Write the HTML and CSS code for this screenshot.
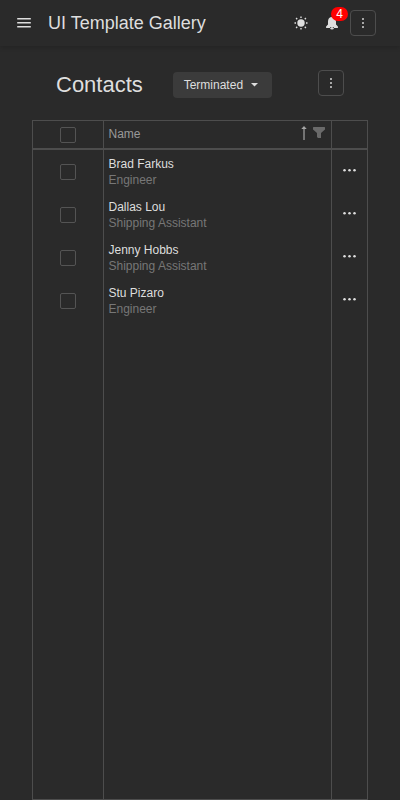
FILE: index.html
```html
<!DOCTYPE html>
<html lang="en">
<head>
<meta charset="utf-8">
<title>UI Template Gallery</title>
<link rel="stylesheet" href="styles.css">
</head>
<body>
<header class="topbar">
  <svg class="menu-icon" width="14" height="12" viewBox="0 0 14 12"><path d="M.2 1.700h13.600M.2 5.700h13.600M.2 9.700h13.600"/></svg>
  <h1 class="app-title">UI Template Gallery</h1>
  <svg class="sun" width="14" height="14" viewBox="0 0 14 14"><circle cx="7" cy="7" r="3.700"/><path d="M7 .5v1.500M7 12v1.500M.5 7h1.500M12 7h1.500M2.100 2.100l1.100 1.100M10.800 10.800l1.100 1.100M2.100 11.900l1.100-1.100M10.800 3.200l1.100-1.100"/></svg>
  <div class="bell-wrap">
    <svg class="bell" width="12" height="13" viewBox="0 0 12 13"><path d="M6 0C3.400 0 2 2 2 4.500v3L.1 9.500v1.500h3.800a2.200 2.200 0 0 0 4.200 0h3.800V9.500L10 7.500v-3C10 2 8.600 0 6 0z"/><path class="bell-slit" d="M4 10.600h1.300M6.700 10.600H8"/></svg>
    <span class="badge">4</span>
  </div>
  <button class="more" aria-label="More"><svg width="2" height="10" viewBox="0 0 2 10"><circle cx="1" cy="1" r=".95"/><circle cx="1" cy="5" r=".95"/><circle cx="1" cy="9" r=".95"/></svg></button>
</header>
<main class="page">
  <div class="toolbar">
    <h2 class="heading">Contacts</h2>
    <button class="filter-btn">Terminated<svg width="7" height="4" viewBox="0 0 7 4"><path d="M0 0h7L3.500 3.500z"/></svg></button>
    <button class="more" aria-label="More"><svg width="2" height="10" viewBox="0 0 2 10"><circle cx="1" cy="1" r=".95"/><circle cx="1" cy="5" r=".95"/><circle cx="1" cy="9" r=".95"/></svg></button>
  </div>
  <section class="grid">
    <div class="row head">
      <div class="cell select"><span class="check"></span></div>
      <div class="cell name-head"><span>Name</span>
        <svg class="sort" width="6" height="14" viewBox="0 0 6 14"><path d="M3 0l2.700 3H.3z"/><path d="M2.400 2h1.200v12H2.400z"/></svg>
        <svg class="funnel" width="12" height="11" viewBox="0 0 12 11"><path d="M.5 0h11l.5.5v2L8 6v5H5L4 10V6L0 2.500v-2z"/></svg>
      </div>
      <div class="cell"></div>
    </div>
    <div class="row">
      <div class="cell select"><span class="check"></span></div>
      <div class="cell person"><span>Brad Farkus</span><span class="role">Engineer</span></div>
      <div class="cell actions"><svg width="13" height="3" viewBox="0 0 13 3"><circle cx="1.500" cy="1.300" r="1.250"/><circle cx="6.500" cy="1.300" r="1.250"/><circle cx="11.500" cy="1.300" r="1.250"/></svg></div>
    </div>
    <div class="row">
      <div class="cell select"><span class="check"></span></div>
      <div class="cell person"><span>Dallas Lou</span><span class="role">Shipping Assistant</span></div>
      <div class="cell actions"><svg width="13" height="3" viewBox="0 0 13 3"><circle cx="1.500" cy="1.300" r="1.250"/><circle cx="6.500" cy="1.300" r="1.250"/><circle cx="11.500" cy="1.300" r="1.250"/></svg></div>
    </div>
    <div class="row">
      <div class="cell select"><span class="check"></span></div>
      <div class="cell person"><span>Jenny Hobbs</span><span class="role">Shipping Assistant</span></div>
      <div class="cell actions"><svg width="13" height="3" viewBox="0 0 13 3"><circle cx="1.500" cy="1.300" r="1.250"/><circle cx="6.500" cy="1.300" r="1.250"/><circle cx="11.500" cy="1.300" r="1.250"/></svg></div>
    </div>
    <div class="row">
      <div class="cell select"><span class="check"></span></div>
      <div class="cell person"><span>Stu Pizaro</span><span class="role">Engineer</span></div>
      <div class="cell actions"><svg width="13" height="3" viewBox="0 0 13 3"><circle cx="1.500" cy="1.300" r="1.250"/><circle cx="6.500" cy="1.300" r="1.250"/><circle cx="11.500" cy="1.300" r="1.250"/></svg></div>
    </div>
    <div class="row filler">
      <div class="cell"></div><div class="cell"></div><div class="cell"></div>
    </div>
  </section>
</main>
</body>
</html>
```

FILE: styles.css
```css
* { box-sizing: border-box; }
body {
  margin: 0;
  height: 800px;
  display: flex;
  flex-direction: column;
  overflow: hidden;
  background: #2a2a2a;
  color: #dedede;
  font: 12px/16px "Liberation Sans", Arial, sans-serif;
}
svg { display: block; fill: #dedede; flex: none; }
h1, h2 { margin: 0; font-weight: 400; white-space: nowrap; }
.topbar {
  height: 46px;
  flex: none;
  display: flex;
  align-items: center;
  padding: 0 24px 0 17px;
  box-shadow: 0 1px 5px rgba(0, 0, 0, .2);
}
.menu-icon { stroke: #dedede; stroke-width: 1.500; margin-right: 17px; }
.app-title { font-size: 18px; line-height: 24px; flex: 1; }
.sun { stroke: #dedede; stroke-width: 1.400; margin-right: 18px; }
.sun circle { stroke: none; }
.bell-wrap { position: relative; margin-right: 12px; }
.bell-slit { stroke: #2a2a2a; stroke-width: .8; }
.badge {
  position: absolute;
  left: 5px;
  top: -10px;
  width: 17px;
  height: 14px;
  border-radius: 7px;
  background: #f00;
  color: #fff;
  line-height: 14px;
  text-align: center;
}
.more {
  width: 26px;
  height: 26px;
  padding: 0;
  border: 1px solid #4d4d4d;
  border-radius: 4px;
  background: none;
  display: flex;
  align-items: center;
  justify-content: center;
}
.page {
  flex: 1;
  display: flex;
  flex-direction: column;
  padding: 24px 32px 0;
}
.toolbar { height: 50px; display: flex; align-items: flex-start; padding-left: 24px; }
.heading { width: 117px; font-size: 22px; line-height: 30px; }
.filter-btn {
  display: flex;
  align-items: center;
  justify-content: space-between;
  width: 99px;
  height: 26px;
  margin: 2px 46px 0 0;
  padding: 0 14px 0 10.700px;
  border: 0;
  border-radius: 4px;
  background: #3b3b3b;
  color: #dedede;
  font: inherit;
}
.grid {
  flex: 1;
  display: flex;
  flex-direction: column;
  border: 1px solid #4d4d4d;
}
.row { display: grid; grid-template-columns: 71px 228px 1fr; height: 43px; }
.head { height: 29px; border-bottom: 2px solid #4d4d4d; }
.filler { flex: 1; }
.cell { border-right: 1px solid #4d4d4d; }
.cell:last-child { border-right: 0; }
.select { display: flex; justify-content: center; padding-top: 14px; }
.head .select { padding-top: 6px; }
.check { width: 16px; height: 16px; border: 1px solid #545454; border-radius: 2px; }
.name-head { display: flex; align-items: flex-start; padding: 5px 6px 0 4.500px; color: #999; }
.name-head span { flex: 1; }
.sort { margin-right: 6px; fill: #a6a6a6; }
.funnel { margin-top: 1px; fill: #6a6a6a; }
.person { display: flex; flex-direction: column; padding: 6px 5px 0 4.500px; }
.role { color: #777; }
.actions { padding: 19px 0 0 11px; }
```
